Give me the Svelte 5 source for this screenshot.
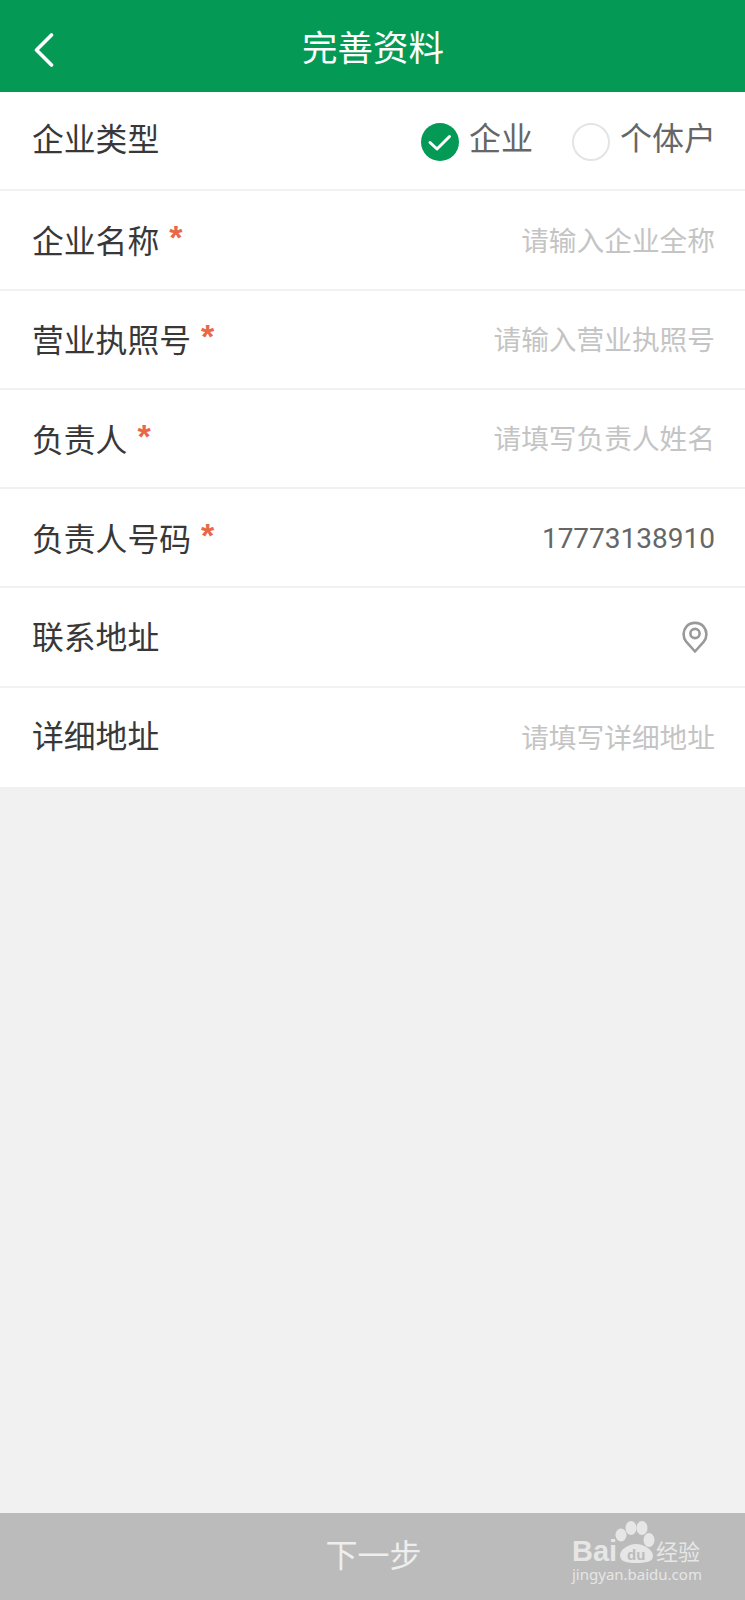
<script>
  const rows = [
    { label: '企业名称', req: true, ph: '请输入企业全称' },
    { label: '营业执照号', req: true, ph: '请输入营业执照号' },
    { label: '负责人', req: true, ph: '请填写负责人姓名' },
    { label: '负责人号码', req: true, value: '17773138910' },
    { label: '联系地址', pin: true, shift: 'up1' },
    { label: '详细地址', ph: '请填写详细地址', shift: 'up3' }
  ];
</script>

<div class="page">
  <header class="top">
    <svg class="back" viewBox="0 0 22 34" width="22" height="34" aria-hidden="true">
      <path d="M18.5 2 L3.5 17 L18.5 32" fill="none" stroke="#fff" stroke-width="3.6" stroke-linecap="round" stroke-linejoin="round" />
    </svg>
    <h1>完善资料</h1>
  </header>

  <main class="form">
    <div class="row">
      <span class="label up3">企业类型</span>
      <div class="radios">
        <div class="radio">
          <svg viewBox="0 0 38 38" width="38" height="38" aria-hidden="true">
            <circle cx="19" cy="19" r="19" fill="#049a55" />
            <path d="M9 19.5 L16 26 L28.5 13.5" fill="none" stroke="#fff" stroke-width="3" stroke-linecap="round" stroke-linejoin="round" />
          </svg>
          <span>企业</span>
        </div>
        <div class="radio">
          <span class="empty"></span>
          <span>个体户</span>
        </div>
      </div>
    </div>

    {#each rows as r}
      <div class="row">
        <span class="label {r.shift ?? ''}">{r.label}{#if r.req}<span class="star">*</span>{/if}</span>
        {#if r.ph}<span class="ph">{r.ph}</span>{/if}
        {#if r.value}<span class="val">{r.value}</span>{/if}
        {#if r.pin}
          <svg class="pin" viewBox="0 0 26 32" width="26" height="32" aria-hidden="true">
            <path d="M13 30.5 L4.2 20.6 C0.4 16 1 9.6 4.4 5.6 C8.8 0.6 17.2 0.6 21.6 5.6 C25 9.6 25.6 16 21.8 20.6 Z" fill="none" stroke="#999" stroke-width="2.6" stroke-linejoin="round" />
            <circle cx="13" cy="12.5" r="4.6" fill="none" stroke="#999" stroke-width="2.6" />
          </svg>
        {/if}
      </div>
    {/each}
  </main>

  <div class="spacer"></div>

  <footer class="next">
    <span>下一步</span>
    <div class="mark">
      <svg class="paw" viewBox="0 0 50 52" width="50" height="52" aria-hidden="true">
        <ellipse cx="7" cy="15" rx="5.5" ry="6.5" fill="#e6e6e6" />
        <ellipse cx="17" cy="8" rx="5.5" ry="7" fill="#e6e6e6" />
        <ellipse cx="28" cy="8" rx="5.5" ry="7" fill="#e6e6e6" />
        <ellipse cx="35" cy="20" rx="5.5" ry="7" fill="#e6e6e6" />
        <path d="M6 35 C6 30 14 24 22 24 C30 24 39 30 39 36 C39 41 34 43 22 43 C11 43 6 41 6 35 Z" fill="#e6e6e6" />
      </svg>
      <b class="bai">Bai</b>
      <i class="du">du</i>
      <em class="jy">经验</em>
      <div class="url">jingyan.baidu.com</div>
    </div>
  </footer>
</div>

<style>
  :global(body) {
    margin: 0;
    background: #f1f1f1;
  }
  .page {
    width: 745px;
    height: 1600px;
    display: flex;
    flex-direction: column;
    font-family: "Noto Sans CJK SC", "Noto Sans", sans-serif;
    overflow: hidden;
  }
  .top {
    height: 92px;
    flex: none;
    background: #049a55;
    display: flex;
    align-items: center;
    justify-content: center;
    position: relative;
  }
  .top h1 {
    margin: 0 0 0 1px;
    font-size: 35.5px;
    font-weight: 400;
    color: #fff;
    line-height: 1;
  }
  .back {
    position: absolute;
    left: 33px;
    top: 33px;
  }
  .form {
    background: #fff;
    flex: none;
  }
  .row {
    height: 99.3px;
    box-sizing: border-box;
    border-bottom: 2px solid #f1f1f1;
    padding: 0 30px 0 32px;
    display: flex;
    align-items: center;
    justify-content: space-between;
  }
  .row:last-child {
    border-bottom: 0;
  }
  .label {
    font-size: 31.8px;
    color: #383838;
    line-height: 1;
    display: flex;
    align-items: flex-start;
  }
  .up1 {
    margin-bottom: 2px;
  }
  .up3 {
    margin-bottom: 6px;
  }
  .star {
    color: #e8694a;
    font-size: 34px;
    font-weight: 700;
    line-height: 1;
    margin: -4px 0 0 10px;
    height: 32px;
    font-family: "Liberation Sans", sans-serif;
  }
  .ph,
  .val {
    font-size: 27.7px;
    line-height: 1;
  }
  .ph {
    color: #c4c4c4;
    margin-bottom: 1px;
  }
  .val {
    font-size: 28px;
    color: #666;
    font-family: Roboto, sans-serif;
    margin-top: 3px;
  }
  .pin {
    margin-right: 7px;
  }
  .radios {
    display: flex;
    gap: 39px;
    margin-right: -1px;
  }
  .radio {
    display: flex;
    align-items: flex-start;
    gap: 10px;
    font-size: 32px;
    line-height: 31px;
    color: #666;
  }
  .radio svg,
  .empty {
    display: block;
    margin-top: 2px;
  }
  .empty {
    width: 38px;
    height: 38px;
    box-sizing: border-box;
    border: 2px solid #e4e4e4;
    border-radius: 50%;
    background: #fff;
  }
  .spacer {
    flex: 1;
  }
  .next {
    height: 87px;
    flex: none;
    background: #bbb;
    color: #eee;
    font-size: 32px;
    display: flex;
    align-items: center;
    justify-content: center;
    position: relative;
  }
  .next > span {
    line-height: 1;
    transform: translate(1px, -4px);
  }
  .mark {
    position: absolute;
    left: 572px;
    top: 6px;
    width: 132px;
    height: 76px;
    color: #e6e6e6;
  }
  .paw {
    position: absolute;
    left: 42px;
    top: 1px;
  }
  .bai {
    position: absolute;
    left: 0;
    top: 21px;
    font-family: "Liberation Sans", sans-serif;
    font-size: 29px;
    line-height: 22px;
    font-weight: 700;
  }
  .du {
    position: absolute;
    left: 55px;
    top: 28px;
    font-family: "Liberation Sans", sans-serif;
    font-style: normal;
    font-weight: 700;
    font-size: 15px;
    line-height: 16px;
    color: #bbb;
  }
  .jy {
    position: absolute;
    left: 84px;
    top: 18px;
    font-style: normal;
    font-size: 22px;
    line-height: 26px;
  }
  .url {
    position: absolute;
    left: 0;
    top: 46px;
    font-family: "Noto Sans", sans-serif;
    font-size: 15px;
    line-height: 18px;
    white-space: nowrap;
  }
</style>
